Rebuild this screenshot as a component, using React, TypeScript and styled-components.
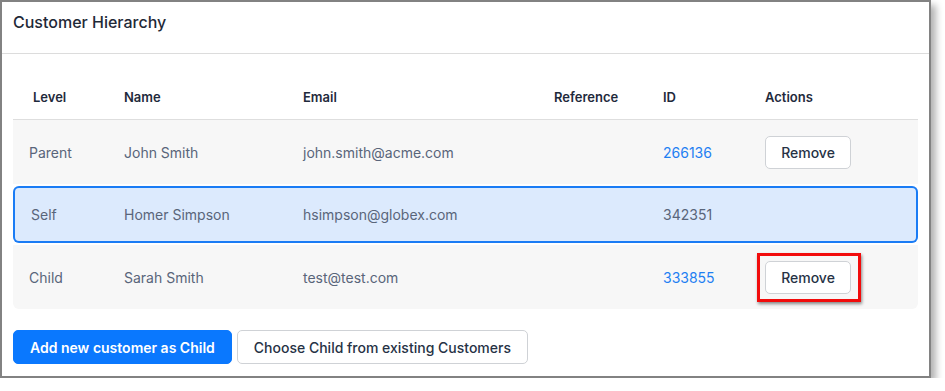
import React from 'react';
import styled, {createGlobalStyle} from "styled-components";

type Customer = {
	level: string
	name: string
	email: string
	reference: string
	id: string
	self?: boolean
	highlighted?: boolean
}

const customers: Customer[] = [
	{level: 'Parent', name: 'John Smith', email: 'john.smith@acme.com', reference: '', id: '266136'},
	{level: 'Self', name: 'Homer Simpson', email: 'hsimpson@globex.com', reference: '', id: '342351', self: true},
	{level: 'Child', name: 'Sarah Smith', email: 'test@test.com', reference: '', id: '333855', highlighted: true},
]

const GlobalStyle = createGlobalStyle`
  body {
    margin: 0;
    background: #ffffff;
    font-family: Inter, 'Noto Sans', sans-serif;
  }
`

export default function App() {
	return (
		<>
			<GlobalStyle/>
			<Frame>
				<Header>
					<Title>Customer Hierarchy</Title>
				</Header>
				<Content>
					<Table>
						<HeadRow>
							<HeadCell $first>Level</HeadCell>
							<HeadCell>Name</HeadCell>
							<HeadCell>Email</HeadCell>
							<HeadCell>Reference</HeadCell>
							<HeadCell>ID</HeadCell>
							<HeadCell>Actions</HeadCell>
						</HeadRow>
						{customers.map((c, i) => (
							<Row key={c.id} $self={c.self} $last={i === customers.length - 1}>
								<Cell $first $self={c.self}>{c.level}</Cell>
								<Cell>{c.name}</Cell>
								<Cell>{c.email}</Cell>
								<Cell>{c.reference}</Cell>
								<Cell>{c.self ? c.id : <IdLink href="#">{c.id}</IdLink>}</Cell>
								<Cell>
									{!c.self && (
										<ButtonWrap>
											<RemoveButton>Remove</RemoveButton>
											{c.highlighted && <Highlight/>}
										</ButtonWrap>
									)}
								</Cell>
							</Row>
						))}
					</Table>
					<Footer>
						<PrimaryButton>Add new customer as Child</PrimaryButton>
						<SecondaryButton>Choose Child from existing Customers</SecondaryButton>
					</Footer>
				</Content>
			</Frame>
		</>
	);
}

const Frame = styled.div`
  width: 931px;
  height: 378px;
  box-sizing: border-box;
  border: 2px solid #828282;
  background: #ffffff;
  box-shadow: 5px 5px 7px rgba(0, 0, 0, 0.3);
  display: flex;
  flex-direction: column;
`

const Header = styled.div`
  height: 52px;
  box-sizing: border-box;
  padding: 10px 11px 0;
  border-bottom: 1px solid #dcdcdc;
`

const Title = styled.h2`
  margin: 0;
  font-size: 16px;
  font-weight: 500;
  line-height: 20px;
  color: #1f2937;
`

const Content = styled.div`
  padding: 20px 11px 11px;
`

const Table = styled.div`
  display: flex;
  flex-direction: column;
  gap: 2px;
`

const columns = '111px 179px 251px 109px 102px 1fr'

const HeadRow = styled.div`
  display: grid;
  grid-template-columns: ${columns};
  height: 46px;
  box-sizing: border-box;
  border-bottom: 1px solid #dedede;
  margin-bottom: -2px;
  align-items: center;
`

const HeadCell = styled.div<{ $first?: boolean }>`
  padding-left: ${p => p.$first ? '20px' : '0'};
  font-size: 13px;
  font-weight: 600;
  color: #1f2a3c;
`

const Row = styled.div<{ $self?: boolean, $last?: boolean }>`
  display: grid;
  grid-template-columns: ${columns};
  align-items: center;
  height: ${p => p.$self ? '57px' : '64px'};
  background: ${p => p.$self ? '#dceafd' : '#f7f7f7'};
  box-shadow: ${p => p.$self ? 'inset 0 0 0 2px #1a7cf5' : 'none'};
  border-radius: ${p => p.$self ? '6px' : p.$last ? '0 0 6px 6px' : '0'};
`

const Cell = styled.div<{ $first?: boolean, $self?: boolean }>`
  padding-left: ${p => p.$first ? (p.$self ? '18px' : '16px') : '0'};
  font-size: 14px;
  color: #59657a;
`

const IdLink = styled.a`
  color: #1f80f2;
  text-decoration: none;
`

const ButtonWrap = styled.div`
  position: relative;
  display: inline-block;
`

const RemoveButton = styled.button`
  height: 33px;
  width: 86px;
  border: 1px solid #cfd2d6;
  border-radius: 5px;
  background: #ffffff;
  font-family: Inter, 'Noto Sans', sans-serif;
  font-size: 14px;
  font-weight: 500;
  color: #263245;
  cursor: pointer;
`

const Highlight = styled.div`
  position: absolute;
  left: -8px;
  top: -8px;
  right: -10px;
  bottom: -8px;
  border: 3px solid #f20c0c;
  box-shadow: 1px 2px 3px rgba(0, 0, 0, 0.45);
  pointer-events: none;
`

const Footer = styled.div`
  display: flex;
  gap: 5px;
  margin-top: 21px;
`

const PrimaryButton = styled.button`
  height: 34px;
  padding: 0 16px;
  border: 1px solid #0a78fe;
  border-radius: 5px;
  background: #0a78fe;
  font-family: Inter, 'Noto Sans', sans-serif;
  font-size: 14px;
  font-weight: 600;
  color: #ffffff;
  cursor: pointer;
`

const SecondaryButton = styled.button`
  height: 34px;
  padding: 0 16px;
  border: 1px solid #cfd2d6;
  border-radius: 5px;
  background: #ffffff;
  font-family: Inter, 'Noto Sans', sans-serif;
  font-size: 14px;
  font-weight: 500;
  color: #263245;
  cursor: pointer;
`
